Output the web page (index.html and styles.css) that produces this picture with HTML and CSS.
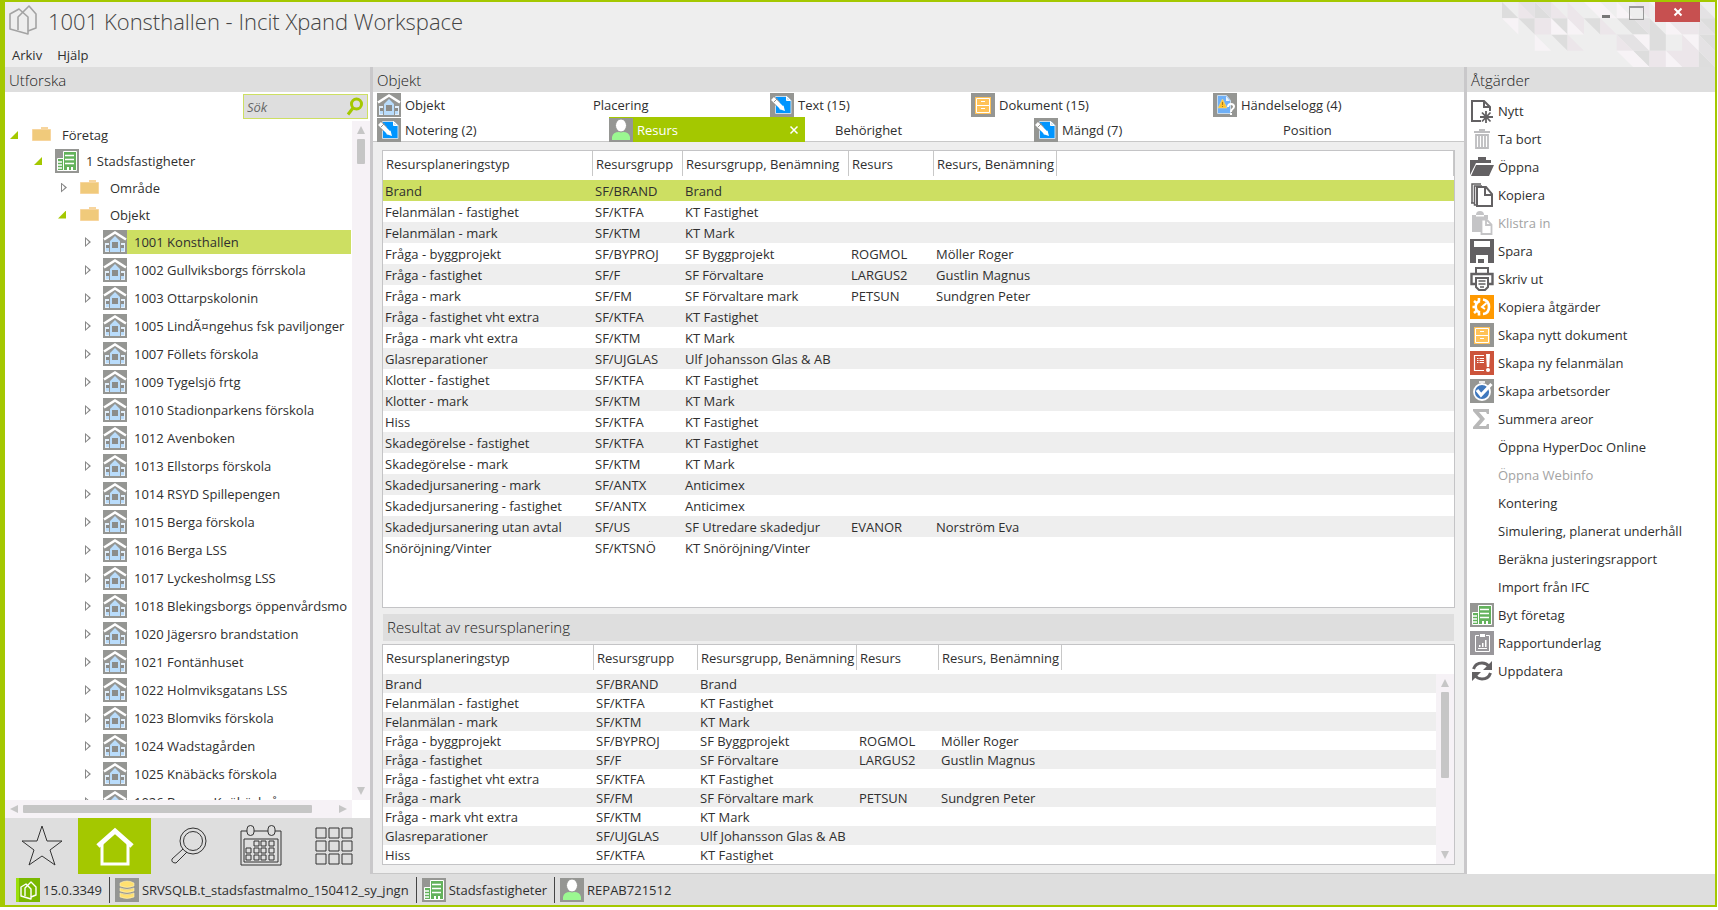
FILE: index.html
```
<!DOCTYPE html>
<html lang="sv">
<head>
  <meta charset="UTF-8" />
  <meta name="viewport" content="width=device-width, initial-scale=1.0" />
  <title>1001 Konsthallen - Incit Xpand Workspace</title>
  <link rel="stylesheet" href="styles.css">
</head>
<body>
  <!-- Ikoner -->
  <svg class="sprite" aria-hidden="true">
    <symbol id="i-logo" viewBox="0 0 28 30">
      <g fill="none" stroke="#a3a3a3" stroke-width="1.6" stroke-linejoin="round">
        <path d="M1 9 L10 4 L19 12 V29 L1 24z"/>
        <path d="M9 25 V12 L20 1 L27 9 V23 L19 26"/>
      </g>
    </symbol>
    <symbol id="i-logo-green" viewBox="0 0 24 24">
      <path fill="#7ab800" d="M0 0h24v24H0z"/><path fill="#9be00a" d="M0 0h3v24H0z"/>
      <g fill="none" stroke="#fff" stroke-width="1.4" stroke-linejoin="round">
        <path d="M5 9 L10 6 L15 11 V21 L5 18z"/>
        <path d="M9 18 V10 L15 4 L20 9 V17 L15 19"/>
      </g>
    </symbol>
    <symbol id="i-house" viewBox="0 0 24 24">
      <path fill="#959693" d="M0 0h24v24H0z"/>
      <path fill="#e3f0fc" d="M2 13h4v9H2zM18 13h4v9h-4z"/>
      <path fill="#b9dcfb" d="M3 18h3v3H3zM18 18h3v3h-3zM7 11l5-5 5 5v11H7z"/>
      <path fill="none" stroke="#fff" stroke-width="2.600" d="M1 9.500 12 2.500 23 9.500"/>
      <path fill="#8b8c8a" d="M9 12h6v6H9zM3 15h3v3H3zM18 15h3v3h-3z"/>
    </symbol>
    <symbol id="i-building" viewBox="0 0 24 24">
      <path fill="#959693" d="M0 0h24v24H0z"/>
      <path fill="#63b25c" stroke="#fff" d="M2.500 9.500h6v12h-6zM8.500 2.500h13v19h-13z"/>
      <path stroke="#fff" stroke-width="1.500" d="M10 6.500h9M10 10.500h9M10 14.500h9M3 13h4M3 16h4M3 19h4"/>
      <path fill="#fff" d="M12 18h2v3h-2zM16 18h2v3h-2z"/>
    </symbol>
    <symbol id="i-folder" viewBox="0 0 24 24">
      <path fill="#f7d59d" d="M10 4h7v3h-7z"/>
      <path fill="#f0ca7b" stroke="#f7d59d" d="M1.500 6.500h18v11h-18z"/>
    </symbol>
    <symbol id="i-note" viewBox="0 0 24 24">
      <path fill="#959693" d="M0 0h24v24H0z"/>
      <path fill="#0095ff" stroke="#c9dcec" d="M5.500 3.500H17l4 4v13H5.500z"/>
      <path fill="#cfe8fb" stroke="#fff" d="M16.500 3.500v4h4z"/>
      <path stroke="#959693" stroke-width="6" d="M2 5 8 11"/>
      <path stroke="#fff" stroke-width="4" d="M2.500 5.500 12 15"/>
      <path fill="#fff" d="m9 16 4.500-3.500L15 18z"/>
      <path stroke="#959693" d="m4 9 3.500-3.500"/>
    </symbol>
    <symbol id="i-cabinet" viewBox="0 0 24 24">
      <path fill="#959693" d="M0 0h24v24H0z"/>
      <path fill="#ffc257" d="M4 4h16v17H4z"/>
      <path fill="none" stroke="#fff" d="M5.500 5.500h13v7h-13zM5.500 12.500h13v7h-13z"/>
      <path stroke="#fff" d="M10 8.500h4M10 15.500h4"/>
    </symbol>
    <symbol id="i-event" viewBox="0 0 24 24">
      <path fill="#959693" d="M0 0h24v24H0z"/>
      <path fill="#6fb0f7" stroke="#c9dcec" d="M4.500 2.500h9l4 5v13h-13z"/>
      <path fill="#e8f2fd" d="M13 3v5h4z"/>
      <path fill="#ffc32b" stroke="#ffe08a" stroke-width=".5" d="M9.500 6 14 15H5z"/>
      <path stroke="#a87a20" d="M9.500 9v3M9.500 13v1"/>
      <path fill="none" stroke="#fff" stroke-width="2" d="M15 14q0-3 3-3t3 2.500q0 1.500-1.500 2.500T18 19M18 20v2"/>
    </symbol>
    <symbol id="i-person" viewBox="0 0 24 24">
      <path fill="#959693" d="M0 0h24v24H0z"/>
      <path fill="#9bf891" d="M3 22v-3q1-5 7-5h4q6 0 7 5v3z"/>
      <ellipse cx="12" cy="7.500" rx="5.500" ry="6.500" fill="#fff" stroke="#959693"/>
    </symbol>
    <symbol id="i-db" viewBox="0 0 24 24">
      <path fill="#959693" d="M0 0h24v24H0z"/>
      <g fill="#ffe070" stroke="#fff1b8" stroke-width=".6">
        <path d="M5 5q7-4 14 0v3q-7 3-14 0z"/>
        <path d="M5 10q7 3 14 0v3q-7 3-14 0z"/>
        <path d="M5 15q7 3 14 0v4q-7 3-14 0z"/>
      </g>
    </symbol>
    <symbol id="i-new" viewBox="0 0 24 24">
      <path fill="none" stroke="#636163" stroke-width="2" d="M11 22H2V2h12l6 6v4M14 2v6h6"/>
      <path stroke="#636163" stroke-width="1.800" d="M16 12v12M10 18h13M12 13.500l8.500 9M20.500 13.500l-8.500 9"/>
    </symbol>
    <symbol id="i-trash" viewBox="0 0 24 24">
      <g fill="none" stroke="#bdbdbf">
        <path stroke-width="2" d="M4 5h16M9 3h6"/>
        <path stroke-width="1.800" d="M6 8v13h12V8zM9 8v13M12 8v13M15 8v13"/>
      </g>
    </symbol>
    <symbol id="i-open" viewBox="0 0 24 24">
      <path fill="#636163" d="M0 5h8V2h8v3h5v3H6L0 20zM6 10h18l-5 11H1z"/>
    </symbol>
    <symbol id="i-copy" viewBox="0 0 24 24">
      <g fill="#fff" stroke="#636163">
        <path stroke-width="1.500" d="M2 20V1h9M1 20h3"/><path stroke-width="1.500" d="M7 22H4.500V3H12"/>
        <path stroke-width="2" d="M7 4h9l6 7v12H7zM15 4v8h7"/>
      </g>
    </symbol>
    <symbol id="i-paste" viewBox="0 0 24 24">
      <path fill="#c4c4c6" d="M2 4h4q0-4 4-4t4 4h4v4h-6v13H2z"/>
      <path fill="#fff" d="M6 4h8v1.500H6z"/>
      <path fill="#fff" stroke="#c4c4c6" stroke-width="1.800" d="M11.500 8.500h5l5 5V23h-10zM16 9v5h5"/>
    </symbol>
    <symbol id="i-save" viewBox="0 0 24 24">
      <path fill="#636163" d="M0 0h24v24H0z"/>
      <path fill="#fff" d="M4 2h16v6H4zM6 16h12v8H6z"/>
      <path fill="#636163" d="M8 20h6v4H8z"/>
    </symbol>
    <symbol id="i-print" viewBox="0 0 24 24">
      <g fill="#fff" stroke="#636163" stroke-width="2">
        <path d="M6 6V1h12v5"/>
        <path stroke-width="2.400" d="M5 17H1.500V7h21v10H19"/>
        <path d="M6 11h12v9l-3 3H9l-3-3z"/>
        <path stroke-width="1.300" d="M8.500 14h7M8.500 17h7M10 20h4"/>
      </g>
    </symbol>
    <symbol id="i-gear" viewBox="0 0 24 24">
      <path fill="#ff9900" d="M0 0h24v24H0z"/>
      <g fill="none" stroke="#fff">
        <path stroke-width="2.600" d="M10 6a6 6 0 0 0 0 11.500"/>
        <path stroke-width="2.600" d="M4 6l3 2.500M2.500 12H6M4 18l3-2.500M9 3v3M9 17.500v3"/>
        <path stroke-width="2.600" d="M13 4.500q6 1 6 7.500t-6 7"/>
        <path stroke-width="2" d="M16.500 8l-4.500 4 3 2"/>
      </g>
    </symbol>
    <symbol id="i-fault" viewBox="0 0 24 24">
      <path fill="#cc543b" d="M0 0h24v24H0z"/>
      <path fill="none" stroke="#fff" stroke-width="1.200" d="M14 4.500H4.500v15H14"/>
      <path stroke="#fff" d="M7 7.500h1.500M9.500 7.500H14M7 9.500h1.500M9.500 9.500H14M7 11.500h1.500M9.500 11.500H14"/>
      <path fill="#fff" d="M16 3h4l-.8 13h-2.400z"/><circle cx="18" cy="19" r="2" fill="#fff"/>
    </symbol>
    <symbol id="i-order" viewBox="0 0 24 24">
      <path fill="#959693" d="M0 0h24v24H0z"/>
      <path stroke="#fff" stroke-width="1.600" d="M9 3h6"/>
      <circle cx="12" cy="13" r="8" fill="#3f78bd" stroke="#fff" stroke-width="1.800"/>
      <path fill="none" stroke="#fff" stroke-width="3.200" d="m7 11 4 5L21.500 5"/>
    </symbol>
    <symbol id="i-sum" viewBox="0 0 24 24">
      <path fill="#b8b8b8" d="M3 2h16v5h-2l-1-2H9l6 7-6 7h7l1-2h2v5H3v-2l7-8-7-8z"/>
    </symbol>
    <symbol id="i-report" viewBox="0 0 24 24">
      <path fill="#99979b" d="M0 0h24v24H0z"/>
      <path fill="none" stroke="#fff" d="M9 4.500H5.500v16h14v-16H16"/>
      <path fill="#fff" d="M10 3h5v3h-5zM9 14h1.500v2H9zM12 12h1.500v4H12zM15 9h1.500v7H15zM8 17h9v1H8z"/>
    </symbol>
    <symbol id="i-refresh" viewBox="0 0 24 24">
      <g fill="none" stroke="#636163" stroke-width="3">
        <path d="M3.500 10q2-6 8.500-6 4.500 0 7 3.500M20.500 14q-2 6-8.500 6-4.500 0-7-3.500"/>
      </g>
      <path fill="#636163" d="M22 2v9h-9zM2 22v-9h9z"/>
    </symbol>
  </svg>

  <div class="window">
    <header class="titlebar">
      <svg class="pattern" viewBox="0 0 13 4" preserveAspectRatio="none" aria-hidden="true">
        <path fill="#dddddd" d="M0 0v1h1zM2 0v1h1zM1 1h1v1zM3 1h1v1zM5 1h1v1zM7 1h1v1zM8 1v1h1zM9 1v1h1zM3 2h1v1zM9 2v1h1zM9 2h1v1zM12 1h1v1zM12 2h1v1zM8 3h1v1zM12 3v1h1z"/>
        <path fill="#e4e2e4" d="M1 0h1v1zM2 0h1v1zM8 1h1v1zM8 2v1h1zM7 2h1v1zM10 0h1v1zM12 0v1h1zM12 1v1h1zM12 2v1h1zM12 3h1v1z"/>
        <path fill="#ece6ea" d="M1 0v1h1zM3 0v1h1zM4 0v1h1zM2 1h1v1h-1zM4 1h1v1zM4 2v1h1zM7 2v1h1zM6 1v1h1zM8 0h1v1zM10 1h1v1zM11 1h1v1h-1zM11 2v1h1zM9 3h1v1h-1zM10 3h1v1zM11 3h1v1h-1z"/>
        <path fill="#f7f3f6" d="M5 0h1v1zM6 0v1h1zM7 0v1h1zM9 0h1v1zM0 1h1v1zM3 1v1h1zM4 1v1h1zM2 2v1h1zM10 1v1h1zM8 2h1v1zM11 2h1v1zM7 3h1v1zM8 3v1h1zM10 3v1h1z"/>
      </svg>
      <div class="title-row">
        <svg class="logo"><use href="#i-logo"/></svg>
        <h1>1001 Konsthallen - Incit Xpand Workspace</h1>
        <div class="window-controls">
          <button class="win-btn minimize" aria-label="Minimera"></button>
          <button class="win-btn maximize" aria-label="Maximera"></button>
          <button class="win-btn close" aria-label="Stäng"><svg viewBox="0 0 10 10"><path d="M1.500 1.500l7 7M8.500 1.500l-7 7"/></svg></button>
        </div>
      </div>
      <nav class="menu">
        <button>Arkiv</button>
        <button>Hjälp</button>
      </nav>
    </header>

    <main class="panels">
      <section class="explorer">
        <h2>Utforska</h2>
        <div class="search-row">
          <div class="search">
            <input type="text" placeholder="Sök" aria-label="Sök">
            <svg viewBox="0 0 18 20"><circle cx="10.500" cy="7" r="5" /><path d="M7 11 2 17.500"/></svg>
          </div>
        </div>
        <div class="tree-area">
          <div class="tree-view"><ul class="tree" id="tree"></ul></div>
          <div class="vscroll"><i class="up"></i><div class="track"><div class="thumb short"></div></div><i class="down"></i></div>
          <div class="hscroll"><i class="left"></i><div class="track"><div class="thumb"></div></div><i class="right"></i></div>
        </div>
        <nav class="modes">
          <button aria-label="Favoriter"><svg viewBox="0 0 44 44"><path d="M22 2l5 15h15L30 26l5 15-13-9-13 9 5-15L2 17h15z"/></svg></button>
          <button class="active" aria-label="Hem"><svg viewBox="0 0 44 44"><path class="roof" d="M5 22 22 7l17 15"/><path class="walls" d="M9 20v20h26V20"/></svg></button>
          <button aria-label="Sök objekt"><svg viewBox="0 0 44 44"><circle cx="27" cy="17" r="13"/><circle cx="27" cy="17" r="9.500"/><path d="M17 25 6 35q-1 4 4 4l11-11"/></svg></button>
          <button aria-label="Kalender"><svg viewBox="0 0 44 44"><path d="M8 7H2v34h40V7h-6M15 7h14M5 15h34v23H5zM8 7v-2a3 3 0 0 1 7 0v3a3 3 0 0 1-7 0zM29 7v-2a3 3 0 0 1 7 0v3a3 3 0 0 1-7 0z"/><path d="M15 17h5v5h-5zM22 17h5v5h-5zM30 17h5v5h-5zM7 24h5v5H7zM15 24h5v5h-5zM22 24h5v5h-5zM30 24h5v5h-5zM7 31h5v5H7zM15 31h5v5h-5zM22 31h5v5h-5zM30 31h5v5h-5z"/></svg></button>
          <button aria-label="Moduler"><svg viewBox="0 0 44 44"><path d="M4 4h10v10H4zM17 4h10v10H17zM30 4h10v10H30zM4 17h10v10H4zM17 17h10v10H17zM30 17h10v10H30zM4 30h10v10H4zM17 30h10v10H17zM30 30h10v10H30z"/></svg></button>
        </nav>
      </section>

      <section class="object">
        <h2>Objekt</h2>
        <nav class="tabs">
          <div class="tab-row first">
            <button><svg class="icon"><use href="#i-house"/></svg>Objekt</button>
            <button><span class="icon"></span>Placering</button>
            <button><svg class="icon"><use href="#i-note"/></svg>Text (15)</button>
            <button><svg class="icon"><use href="#i-cabinet"/></svg>Dokument (15)</button>
            <button><svg class="icon"><use href="#i-event"/></svg>Händelselogg (4)</button>
          </div>
          <div class="tab-row second">
            <button><svg class="icon"><use href="#i-note"/></svg>Notering (2)</button>
            <button class="active"><svg class="icon"><use href="#i-person"/></svg>Resurs<svg class="tab-close" viewBox="0 0 10 10"><path d="M1.500 1.500l7 7M8.500 1.500l-7 7"/></svg></button>
            <button><span class="icon"></span>Behörighet</button>
            <button><svg class="icon"><use href="#i-note"/></svg>Mängd (7)</button>
            <button><span class="icon"></span>Position</button>
          </div>
        </nav>
        <div class="content">
          <div class="grid planning">
            <table>
              <colgroup><col class="c-type"><col class="c-group"><col class="c-name"><col class="c-res"><col class="c-resname"><col></colgroup>
              <thead><tr><th>Resursplaneringstyp</th><th>Resursgrupp</th><th>Resursgrupp, Benämning</th><th>Resurs</th><th>Resurs, Benämning</th><th></th></tr></thead>
              <tbody id="planning"></tbody>
            </table>
          </div>
          <h3>Resultat av resursplanering</h3>
          <div class="grid result">
            <table>
              <colgroup><col class="c-type"><col class="c-group"><col class="c-name"><col class="c-res"><col class="c-resname"><col></colgroup>
              <thead><tr><th>Resursplaneringstyp</th><th>Resursgrupp</th><th>Resursgrupp, Benämning</th><th>Resurs</th><th>Resurs, Benämning</th><th></th></tr></thead>
              <tbody id="result"></tbody>
            </table>
            <div class="vscroll"><i class="up"></i><div class="track"><div class="thumb long"></div></div><i class="down"></i></div>
          </div>
        </div>
      </section>

      <aside class="actions">
        <h2>Åtgärder</h2>
        <ul>
          <li><button><svg class="icon"><use href="#i-new"/></svg>Nytt</button></li>
          <li><button><svg class="icon"><use href="#i-trash"/></svg>Ta bort</button></li>
          <li><button><svg class="icon"><use href="#i-open"/></svg>Öppna</button></li>
          <li><button><svg class="icon"><use href="#i-copy"/></svg>Kopiera</button></li>
          <li><button disabled><svg class="icon"><use href="#i-paste"/></svg>Klistra in</button></li>
          <li><button><svg class="icon"><use href="#i-save"/></svg>Spara</button></li>
          <li><button><svg class="icon"><use href="#i-print"/></svg>Skriv ut</button></li>
          <li><button><svg class="icon"><use href="#i-gear"/></svg>Kopiera åtgärder</button></li>
          <li><button><svg class="icon"><use href="#i-cabinet"/></svg>Skapa nytt dokument</button></li>
          <li><button><svg class="icon"><use href="#i-fault"/></svg>Skapa ny felanmälan</button></li>
          <li><button><svg class="icon"><use href="#i-order"/></svg>Skapa arbetsorder</button></li>
          <li><button><svg class="icon"><use href="#i-sum"/></svg>Summera areor</button></li>
          <li><button><span class="icon"></span>Öppna HyperDoc Online</button></li>
          <li><button disabled><span class="icon"></span>Öppna Webinfo</button></li>
          <li><button><span class="icon"></span>Kontering</button></li>
          <li><button><span class="icon"></span>Simulering, planerat underhåll</button></li>
          <li><button><span class="icon"></span>Beräkna justeringsrapport</button></li>
          <li><button><span class="icon"></span>Import från IFC</button></li>
          <li><button><svg class="icon"><use href="#i-building"/></svg>Byt företag</button></li>
          <li><button><svg class="icon"><use href="#i-report"/></svg>Rapportunderlag</button></li>
          <li><button><svg class="icon"><use href="#i-refresh"/></svg>Uppdatera</button></li>
        </ul>
      </aside>
    </main>

    <footer class="statusbar">
      <span><svg class="icon"><use href="#i-logo-green"/></svg>15.0.3349</span>
      <span><svg class="icon"><use href="#i-db"/></svg>SRVSQLB.t_stadsfastmalmo_150412_sy_jngn</span>
      <span><svg class="icon"><use href="#i-building"/></svg>Stadsfastigheter</span>
      <span><svg class="icon"><use href="#i-person"/></svg>REPAB721512</span>
    </footer>
  </div>

  <script>
    const objects = [
      "1001 Konsthallen", "1002 Gullviksborgs förrskola", "1003 Ottarpskolonin",
      "1005 LindÃ¤ngehus fsk paviljonger", "1007 Föllets förskola", "1009 Tygelsjö frtg",
      "1010 Stadionparkens förskola", "1012 Avenboken", "1013 Ellstorps förskola",
      "1014 RSYD Spillepengen", "1015 Berga förskola", "1016 Berga LSS",
      "1017 Lyckesholmsg LSS", "1018 Blekingsborgs öppenvårdsmo", "1020 Jägersro brandstation",
      "1021 Fontänhuset", "1022 Holmviksgatans LSS", "1023 Blomviks förskola",
      "1024 Wadstagården", "1025 Knäbäcks förskola", "1026 Braxen Knäbäckså"
    ];

    const tree = {
      name: "Företag", icon: "folder", open: true, children: [
        { name: "1 Stadsfastigheter", icon: "building", open: true, children: [
          { name: "Område", icon: "folder" },
          { name: "Objekt", icon: "folder", open: true, children: objects.map((name, i) => ({ name, icon: "house", selected: i === 0 })) }
        ] }
      ]
    };

    const planning = [
      ["Brand", "SF/BRAND", "Brand"],
      ["Felanmälan - fastighet", "SF/KTFA", "KT Fastighet"],
      ["Felanmälan - mark", "SF/KTM", "KT Mark"],
      ["Fråga - byggprojekt", "SF/BYPROJ", "SF Byggprojekt", "ROGMOL", "Möller Roger"],
      ["Fråga - fastighet", "SF/F", "SF Förvaltare", "LARGUS2", "Gustlin Magnus"],
      ["Fråga - mark", "SF/FM", "SF Förvaltare mark", "PETSUN", "Sundgren Peter"],
      ["Fråga - fastighet vht extra", "SF/KTFA", "KT Fastighet"],
      ["Fråga - mark vht extra", "SF/KTM", "KT Mark"],
      ["Glasreparationer", "SF/UJGLAS", "Ulf Johansson Glas & AB"],
      ["Klotter - fastighet", "SF/KTFA", "KT Fastighet"],
      ["Klotter - mark", "SF/KTM", "KT Mark"],
      ["Hiss", "SF/KTFA", "KT Fastighet"],
      ["Skadegörelse - fastighet", "SF/KTFA", "KT Fastighet"],
      ["Skadegörelse - mark", "SF/KTM", "KT Mark"],
      ["Skadedjursanering - mark", "SF/ANTX", "Anticimex"],
      ["Skadedjursanering - fastighet", "SF/ANTX", "Anticimex"],
      ["Skadedjursanering utan avtal", "SF/US", "SF Utredare skadedjur", "EVANOR", "Norström Eva"],
      ["Snöröjning/Vinter", "SF/KTSNÖ", "KT Snöröjning/Vinter"]
    ];

    // Resultatlistan är sorterad på typ
    const result = [0, 1, 2, 3, 4, 6, 5, 7, 8, 11].map(i => planning[i]);

    function renderNode(node) {
      const li = document.createElement("li");
      li.innerHTML = `
        <div class="node ${node.icon}">
          <button class="toggle ${node.open ? "open" : ""}" aria-label="Visa eller dölj"></button>
          <button class="label ${node.selected ? "selected" : ""}">
            <svg class="icon"><use href="#i-${node.icon}"/></svg>${node.name}
          </button>
        </div>`;
      if (node.children) {
        const ul = document.createElement("ul");
        node.children.forEach(child => ul.appendChild(renderNode(child)));
        li.appendChild(ul);
      }
      return li;
    }

    function renderRows(id, rows, selected) {
      const body = document.getElementById(id);
      rows.forEach((row, index) => {
        const tr = body.insertRow();
        if (index === selected) tr.classList.add("selected");
        for (let i = 0; i < 6; i++) {
          tr.insertCell().textContent = row[i] || "";
        }
      });
    }

    document.getElementById("tree").appendChild(renderNode(tree));
    renderRows("planning", planning, 0);
    renderRows("result", result, -1);
  </script>
</body>
</html>
```
FILE: styles.css
```
* {
  margin: 0;
  padding: 0;
  box-sizing: border-box;
}
body {
  font-family: "Open Sans", "Noto Sans", sans-serif;
  font-size: 13px;
  color: #2f2f2f;
  background: #fff;
}
button {
  font: inherit;
  color: inherit;
  background: none;
  border: none;
  text-align: left;
  white-space: nowrap;
}
ul {
  list-style: none;
}
.sprite {
  position: absolute;
  width: 0;
  height: 0;
}
.icon {
  flex: none;
  width: 24px;
  height: 24px;
}
.window {
  display: flex;
  flex-direction: column;
  height: calc(100vh - 3px);
  margin-right: 1px;
  border: 2px solid #a4c800;
  border-left-width: 5px;
  background: #eee;
}

/* Titelrad */
.titlebar {
  position: relative;
  flex: none;
  height: 65px;
}
.pattern {
  position: absolute;
  top: 0;
  right: 0;
  width: 213px;
  height: 65px;
}
.title-row {
  position: relative;
  display: flex;
  align-items: flex-start;
  height: 38px;
}
.logo {
  width: 28px;
  height: 30px;
  margin: 3px 11px 0 4px;
}
h1 {
  flex: 1;
  font-size: 22px;
  font-weight: 300;
  line-height: 38px;
  color: #444;
}
.window-controls {
  display: flex;
  margin-right: 15px;
}
.win-btn {
  height: 20px;
  width: 30px;
  display: flex;
  align-items: center;
  justify-content: center;
}
.minimize::before {
  content: "";
  width: 8px;
  height: 3px;
  margin-top: 9px;
  background: #777;
}
.maximize::before {
  content: "";
  width: 13px;
  height: 11px;
  margin-top: 1px;
  border: 1px solid #999;
  border-top-width: 2px;
}
.win-btn.close {
  width: 45px;
  margin-left: 4px;
  background: #c75050;
}
.close svg,
.tab-close {
  width: 10px;
  height: 10px;
  stroke: #fff;
  stroke-width: 2;
}
.tab-close {
  stroke-width: 1.5;
}
.menu {
  display: flex;
  gap: 15px;
  padding: 1px 0 0 7px;
  line-height: 28px;
}

/* Paneler */
.panels {
  flex: 1;
  min-height: 0;
  display: grid;
  grid-template-columns: 365px 1fr 248px;
  gap: 3px;
  background: #c9c8ca;
}
.panels > section,
.panels > aside {
  display: flex;
  flex-direction: column;
  min-width: 0;
  min-height: 0;
  background: #fff;
}
h2 {
  flex: none;
  padding: 1px 0 0 4px;
  font-size: 15px;
  font-weight: 300;
  line-height: 24px;
  color: #222;
  background: #dedede;
}

/* Utforska */
.search-row {
  flex: none;
  display: flex;
  justify-content: flex-end;
  padding: 2px 2px 2px 0;
}
.search {
  display: flex;
  align-items: center;
  width: 125px;
  height: 25px;
  padding-right: 3px;
  border: 1px solid #cddf62;
  background: #dedede;
}
.search input {
  flex: 1;
  min-width: 0;
  padding-left: 3px;
  border: none;
  outline: none;
  background: none;
  font: italic 13px "Open Sans", sans-serif;
}
.search input::placeholder {
  color: #666;
}
.search svg {
  width: 18px;
  height: 20px;
  fill: none;
  stroke: #a4c800;
  stroke-width: 3;
}
.tree-area {
  flex: 1;
  min-height: 0;
  display: grid;
  grid-template: 1fr 18px / 1fr 18px;
}
.tree-view {
  overflow: hidden;
  min-height: 0;
  padding: 1px 1px 0 5px;
}
.tree ul {
  padding-left: 24px;
}
.node {
  display: flex;
  align-items: center;
  height: 26px;
}
.tree ul .folder {
  height: 27px;
}
.node.house {
  height: 28px;
}
.toggle {
  flex: none;
  width: 21px;
  height: 20px;
}
.toggle::before {
  content: "";
  display: block;
  width: 6px;
  height: 10px;
  margin-left: 3px;
  background: #888;
  clip-path: polygon(0 0, 100% 50%, 0 100%, 0 0, 1px 2px, 1px 8px, 4px 5px, 1px 2px);
}
.toggle.open::before {
  width: 8px;
  height: 8px;
  margin-left: 0;
  background: #a4c800;
  clip-path: polygon(100% 0, 100% 100%, 0 100%);
}
.label {
  flex: 1;
  display: flex;
  align-items: center;
  gap: 7px;
  height: 24px;
}
.label.selected {
  background: #cddf62;
}

/* Rullningslister */
.vscroll,
.hscroll {
  display: flex;
  align-items: center;
  background: #f6f2f6;
}
.vscroll {
  flex-direction: column;
  padding: 5px 0;
}
.hscroll {
  padding: 0 5px;
}
.track {
  flex: 1;
}
.vscroll .track {
  width: 8px;
  padding: 5px 0;
}
.hscroll .track {
  height: 8px;
  padding: 0 5px;
}
.thumb {
  height: 100%;
  width: 93%;
  border-radius: 1px;
  background: #c6c6c6;
}
.vscroll .thumb {
  width: 100%;
}
.thumb.short {
  height: 25px;
}
.thumb.long {
  height: 86px;
}
.vscroll i,
.hscroll i {
  width: 8px;
  height: 8px;
  background: #c6c6c6;
}
.up { clip-path: polygon(50% 0, 100% 100%, 0 100%); }
.down { clip-path: polygon(0 0, 100% 0, 50% 100%); }
.left { clip-path: polygon(100% 0, 100% 100%, 0 50%); }
.right { clip-path: polygon(0 0, 100% 50%, 0 100%); }

.modes {
  flex: none;
  display: grid;
  grid-template-columns: repeat(5, 1fr);
  height: 56px;
  background: #dedede;
}
.modes button {
  display: flex;
  align-items: center;
  justify-content: center;
}
.modes svg {
  width: 44px;
  height: 44px;
  fill: none;
  stroke: #333;
  stroke-width: 1;
}
.modes .active {
  background: #a4c800;
}
.modes .active svg {
  stroke: #fff;
  stroke-width: 3;
}
.modes .roof {
  stroke-width: 5;
}

/* Flikar */
.tabs {
  flex: none;
  height: 50px;
  padding: 1px 4px 0;
  border-bottom: 1px solid #c8c8c8;
}
.tab-row {
  display: grid;
}
.tab-row.first {
  grid-template-columns: 188fr 205fr 201fr 242fr 247fr;
}
.tab-row.second {
  grid-template-columns: 232fr 198fr 227fr 221fr 205fr;
}
.tab-row button {
  display: flex;
  align-items: center;
  gap: 4px;
  height: 24px;
}
.tab-row.second button {
  height: 25px;
}
.tab-row .active {
  margin-right: 2px;
  color: #fff;
  background: #a4c800;
}
.tab-close {
  margin: 0 6px 0 auto;
}

/* Innehåll */
.content {
  flex: 1;
  min-height: 0;
  display: flex;
  flex-direction: column;
  padding: 8px 9px;
  background: #eee;
  border-bottom: 1px solid #c8c8c8;
}
.grid {
  border: 1px solid #c4c4c6;
  background: #fff;
}
.planning {
  flex: 1;
}
table {
  width: 100%;
  table-layout: fixed;
  border-collapse: collapse;
}
.c-type { width: 210px; }
.planning .c-group { width: 90px; }
.planning .c-name { width: 166px; }
.planning .c-res { width: 85px; }
.planning .c-resname { width: 123px; }
.result .c-type { width: 211px; }
.result .c-group { width: 104px; }
.result .c-name { width: 159px; }
.result .c-res { width: 82px; }
.result .c-resname { width: 123px; }
th {
  height: 29px;
  padding: 0 0 4px 3px;
  font-weight: 400;
  text-align: left;
  white-space: nowrap;
  background: linear-gradient(#c8c8c8, #c8c8c8) right top / 1px 25px no-repeat;
}
td {
  height: 21px;
  padding: 1px 0 0 2px;
  line-height: 18px;
  white-space: nowrap;
}
tbody tr:nth-child(odd) {
  background: #eee;
}
tbody tr.selected {
  background: #cddf62;
}
h3 {
  flex: none;
  margin: 6px 1px 3px;
  padding-left: 4px;
  font-size: 15px;
  font-weight: 300;
  line-height: 27px;
  color: #222;
  background: #dedede;
}
.result {
  position: relative;
  flex: none;
}
.result td {
  height: 19px;
}
.result .vscroll {
  position: absolute;
  top: 29px;
  right: 0;
  bottom: 0;
  width: 18px;
}
.result th:last-child {
  background: none;
}

/* Åtgärder */
.actions ul {
  padding: 5px 3px;
}
.actions button {
  display: flex;
  align-items: center;
  gap: 4px;
  height: 28px;
}
.actions button:disabled {
  color: #a3a3a3;
}

/* Statusrad */
.statusbar {
  flex: none;
  display: flex;
  align-items: center;
  height: 31px;
  padding-left: 6px;
  background: #dedede;
}
.statusbar span {
  display: flex;
  align-items: center;
  gap: 3px;
  height: 26px;
  padding: 0 7px 0 5px;
  border-right: 1px solid #444;
}
.statusbar span:last-child {
  border-right: none;
}
```
